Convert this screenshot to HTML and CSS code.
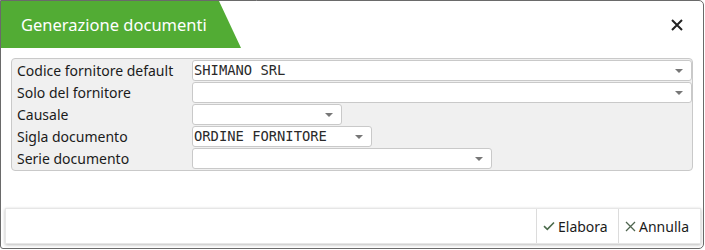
FILE: index.html
```html
<!DOCTYPE html>
<html lang="it">
<head>
<meta charset="utf-8">
<title>Generazione documenti</title>
<link rel="stylesheet" href="styles.css">
</head>
<body>
<div class="window">
  <div class="header">
    <div class="title">Generazione documenti</div>
    <button class="close" aria-label="Chiudi">
      <svg width="12" height="12" viewBox="0 0 12 12"><path d="M1 1 L11 11 M11 1 L1 11" stroke="#222" stroke-width="2" fill="none"/></svg>
    </button>
  </div>

  <div class="panel">
    <div class="label">Codice fornitore default</div>
    <div class="field w-full"><span class="value">SHIMANO SRL</span><span class="arrow"></span></div>

    <div class="label">Solo del fornitore</div>
    <div class="field w-full"><span class="value"></span><span class="arrow"></span></div>

    <div class="label">Causale</div>
    <div class="field w-150"><span class="value"></span><span class="arrow"></span></div>

    <div class="label">Sigla documento</div>
    <div class="field w-180"><span class="value">ORDINE FORNITORE</span><span class="arrow"></span></div>

    <div class="label">Serie documento</div>
    <div class="field w-300"><span class="value"></span><span class="arrow"></span></div>
  </div>

  <div class="footer">
    <button class="btn">
      <svg width="12" height="10" viewBox="0 0 12 10"><path d="M1 5.2 L4.3 8.3 L11 1.5" stroke="#4c6b4c" stroke-width="1.6" fill="none"/></svg>
      <span>Elabora</span>
    </button>
    <button class="btn">
      <svg width="11" height="11" viewBox="0 0 11 11"><path d="M1 1 L10 10 M10 1 L1 10" stroke="#4f654f" stroke-width="1.3" fill="none"/></svg>
      <span>Annulla</span>
    </button>
  </div>
</div>
</body>
</html>
```

FILE: styles.css
```css
* { box-sizing: border-box; }

html, body {
  margin: 0;
  padding: 0;
  background: #ffffff;
}

body {
  font-family: "Noto Sans", "Open Sans", sans-serif;
  color: #1b1b1b;
}

.window {
  width: 704px;
  height: 249px;
  border: 1px solid #6a6a6a;
  border-radius: 0 5px 5px 3px;
  background: #ffffff;
  overflow: hidden;
  display: flex;
  flex-direction: column;
}

.header {
  height: 47px;
  display: flex;
  align-items: center;
  justify-content: space-between;
  flex-shrink: 0;
}

.title {
  width: 240px;
  height: 47px;
  background: #52ac34;
  clip-path: polygon(0 0, 218px 0, 240px 100%, 0 100%);
  color: #ffffff;
  font-size: 16.5px;
  line-height: 48px;
  padding-left: 20px;
  white-space: nowrap;
}

.close {
  border: 0;
  background: none;
  padding: 0;
  margin-right: 20px;
  width: 12px;
  height: 12px;
  display: flex;
}

.panel {
  margin: 10px 10px 0 10px;
  border: 1px solid #c9c9c9;
  border-radius: 4px;
  background: #f0f0f0;
  padding: 1px 0 1px 5px;
  display: grid;
  grid-template-columns: 175px 1fr;
  grid-auto-rows: 21px;
  row-gap: 1px;
  flex-shrink: 0;
}

.label {
  font-size: 14px;
  line-height: 22px;
  white-space: nowrap;
}

.field {
  position: relative;
  height: 21px;
  background: #ffffff;
  border: 1px solid #c9c9c9;
  border-radius: 3px;
  display: flex;
  align-items: center;
}

.w-full { width: 100%; }
.w-150 { width: 150px; }
.w-180 { width: 180px; }
.w-300 { width: 300px; }

.value {
  flex: 1;
  font-family: "DejaVu Sans Mono", "Liberation Mono", monospace;
  font-size: 13.8px;
  line-height: 19px;
  padding-left: 1px;
  color: #2a2a2a;
  white-space: nowrap;
}

.arrow {
  width: 0;
  height: 0;
  border-left: 4px solid transparent;
  border-right: 4px solid transparent;
  border-top: 4px solid #777;
  margin-right: 8px;
}

.footer {
  margin: 37px 2px 0 4px;
  height: 36px;
  background: #ffffff;
  border: 1px solid #e6e6e6;
  box-shadow: 0 1px 3px rgba(0, 0, 0, 0.28);
  display: flex;
  justify-content: flex-end;
}

.btn {
  height: 100%;
  width: 82px;
  border: 0;
  border-left: 1px solid #dcdcdc;
  background: #ffffff;
  padding: 0 0 0 6px;
  display: flex;
  align-items: center;
  gap: 3px;
  font-family: "Noto Sans", "Open Sans", sans-serif;
  font-size: 14px;
  color: #1b1b1b;
}
```
